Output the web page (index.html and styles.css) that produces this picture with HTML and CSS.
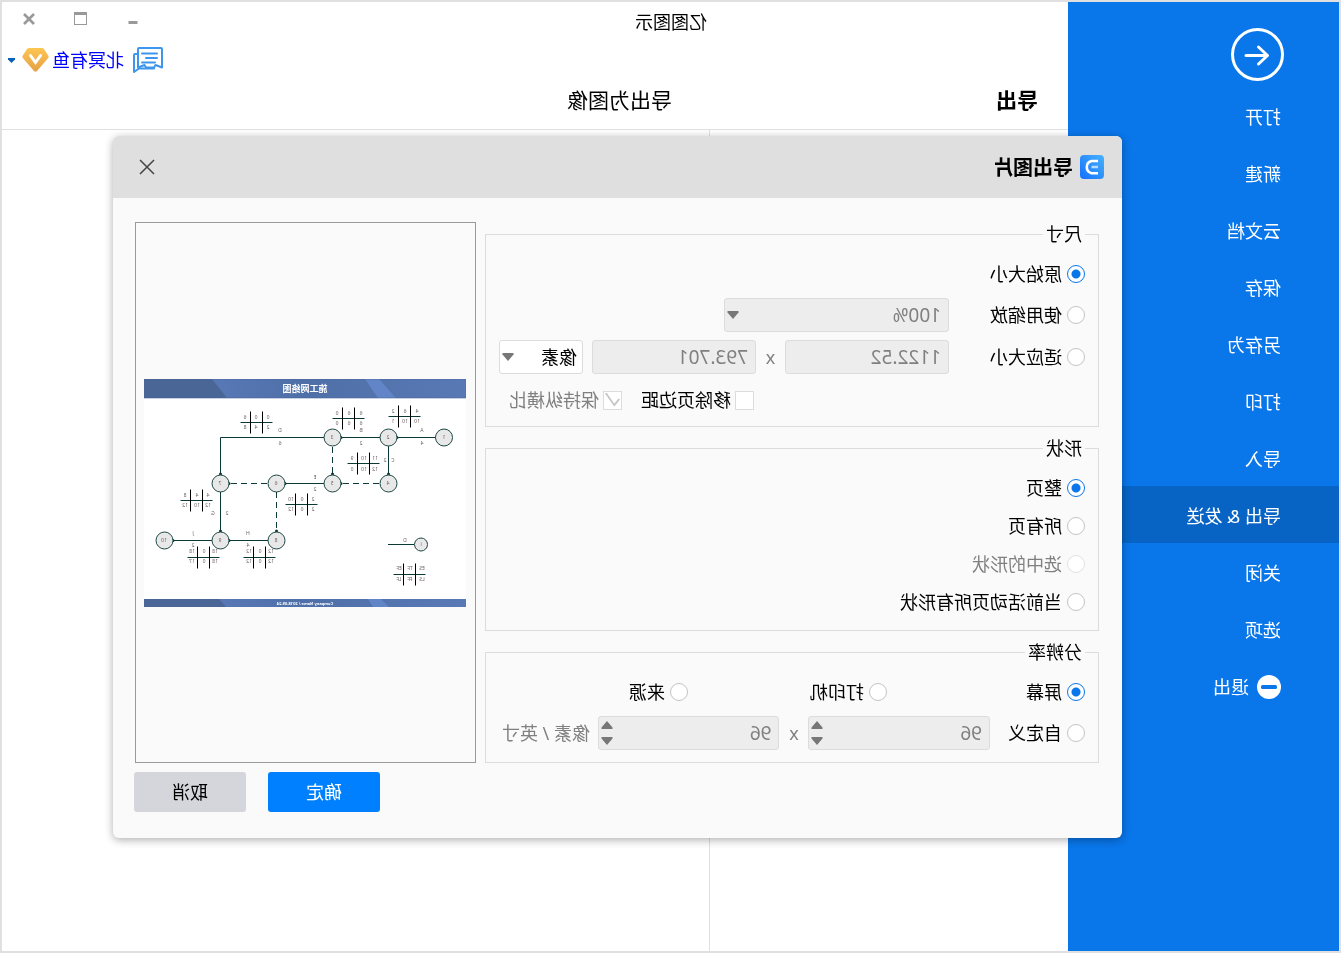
FILE: index.html
```html
<!DOCTYPE html>
<html lang="zh-CN">
<head>
<meta charset="utf-8">
<title>亿图图示</title>
<link rel="stylesheet" href="styles.css">
</head>
<body>
<div class="window">
  <nav class="sidebar">
    <button class="back" type="button" aria-label="返回">
      <svg viewBox="0 0 54 54" width="54" height="54" fill="none" stroke="#fff" stroke-linecap="round" stroke-linejoin="round"><circle cx="26.500" cy="26.500" r="25" stroke-width="3"/><path d="M38 27.500H16.500M25.500 19L16.500 27.500L25.500 36" stroke-width="3"/></svg>
    </button>
    <a class="nav-item" href="#">打开</a>
    <a class="nav-item" href="#">新建</a>
    <a class="nav-item" href="#">云文档</a>
    <a class="nav-item" href="#">保存</a>
    <a class="nav-item" href="#">另存为</a>
    <a class="nav-item" href="#">打印</a>
    <a class="nav-item" href="#">导入</a>
    <a class="nav-item active" href="#">导出 &amp; 发送</a>
    <a class="nav-item" href="#">关闭</a>
    <a class="nav-item" href="#">选项</a>
    <a class="nav-item" href="#"><svg viewBox="0 0 24 24" width="24" height="24"><circle cx="12" cy="12" r="12" fill="#fff"/><rect x="4" y="10" width="16" height="4" rx="1.500" fill="#0976ea"/></svg>退出</a>
  </nav>
  <main class="main">
    <header class="titlebar">
      <span class="app-title">亿图图示</span>
      <div class="controls">
        <button type="button" aria-label="最小化"><svg viewBox="0 0 14 14" width="14" height="14"><rect x="2.500" y="9" width="9" height="3" fill="#999"/></svg></button>
        <button type="button" aria-label="最大化"><svg viewBox="0 0 14 14" width="14" height="14" fill="none" stroke="#999"><rect x="1.500" y="1.500" width="12" height="11"/><path d="M1 1.500H14" stroke-width="3"/></svg></button>
        <button type="button" aria-label="关闭窗口"><svg viewBox="0 0 14 14" width="14" height="14" stroke="#999" stroke-width="2.600"><path d="M2 2L12 12M12 2L2 12"/></svg></button>
      </div>
    </header>
    <div class="userbar">
      <svg class="chat" viewBox="0 0 30 26" width="30" height="26" fill="none" stroke="#3d96ee" stroke-width="2" stroke-linecap="round" stroke-linejoin="round"><path d="M2 1H24Q25 1 25 2V20.500L18.500 18L17 20.500H9L7.500 18L1 20.500V2Q1 1 2 1Z"/><path d="M6 6.500H21M6 11H17M8 15.500H21M25 7H28Q29 7 29 8V25L24 21.500H9"/></svg>
      <a class="user" href="#">北冥有鱼</a>
      <svg class="gem" viewBox="0 0 27 24" width="27" height="24"><defs><linearGradient id="gold" x2="0" y2="1"><stop offset="0" stop-color="#fdc653"/><stop offset="1" stop-color="#e5a045"/></linearGradient></defs><path d="M7 0H20Q21 0 22 1L26.500 8Q27 9 26.200 10L15 23Q13.500 24.500 12 23L.800 10Q0 9 .500 8L5 1Q6 0 7 0Z" fill="url(#gold)"/><path d="M8.500 7.500L13.500 14.500L18.500 7.500" fill="none" stroke="#fff" stroke-width="3" stroke-linecap="round"/></svg>
      <svg class="caret" viewBox="0 0 7 5" width="7" height="5"><path d="M0 0H7V1.500L3.500 5L0 1.500Z" fill="#0860b8"/></svg>
    </div>
    <div class="heads">
      <h1>导出</h1>
      <h2>导出为图像</h2>
    </div>
    <div class="panels"><div class="panel-list"></div><div></div></div>
  </main>

  <section class="dialog" role="dialog" aria-labelledby="dlg-title">
    <header class="dlg-head">
      <svg viewBox="0 0 24 24" width="24" height="24"><defs><linearGradient id="brand" x2="1" y2="1"><stop offset="0" stop-color="#48b2fb"/><stop offset="1" stop-color="#1470ff"/></linearGradient></defs><rect width="24" height="24" rx="4" fill="url(#brand)"/><path d="M6 6H12.500A6.300 6.300 0 0 1 12.500 18.200H6" fill="none" stroke="#fff" stroke-width="2.600"/><path d="M6 12H12.500" stroke="#b5dbff" stroke-width="2.600"/></svg>
      <h3 id="dlg-title">导出图片</h3>
      <button class="dlg-close" type="button" aria-label="关闭"><svg viewBox="0 0 16 16" width="16" height="16" stroke="#444" stroke-width="1.500"><path d="M1 1L15 15M15 1L1 15"/></svg></button>
    </header>
    <form class="dlg-body">
      <div class="groups">
        <fieldset class="size">
          <legend>尺寸</legend>
          <div class="row"><label class="opt"><input type="radio" name="size" checked>原始大小</label></div>
          <div class="row">
            <label class="opt wide"><input type="radio" name="size">使用缩放</label>
            <span class="combo zoom"><select disabled aria-label="缩放"><option>100%</option></select><svg viewBox="0 0 12 8" width="12" height="8"><path d="M.500 0H11.500V1.500L6 8L.500 1.500Z"/></svg></span>
          </div>
          <div class="row">
            <label class="opt wide"><input type="radio" name="size">适应大小</label>
            <input class="num" type="text" value="1122.52" disabled aria-label="宽度">
            <span class="times">x</span>
            <input class="num" type="text" value="793.701" disabled aria-label="高度">
            <span class="combo unit"><select aria-label="单位"><option>像素</option></select><svg viewBox="0 0 12 8" width="12" height="8"><path d="M.500 0H11.500V1.500L6 8L.500 1.500Z"/></svg></span>
          </div>
          <div class="row checks">
            <label class="opt"><input type="checkbox">移除页边距</label>
            <label class="opt off"><input type="checkbox" checked disabled>保持纵横比</label>
          </div>
        </fieldset>
        <fieldset class="shape">
          <legend>形状</legend>
          <div class="row"><label class="opt"><input type="radio" name="shape" checked>整页</label></div>
          <div class="row"><label class="opt"><input type="radio" name="shape">所有页</label></div>
          <div class="row"><label class="opt off"><input type="radio" name="shape" disabled>选中的形状</label></div>
          <div class="row"><label class="opt"><input type="radio" name="shape">当前活动页所有形状</label></div>
        </fieldset>
        <fieldset class="dpi">
          <legend>分辨率</legend>
          <div class="row triple">
            <label class="opt"><input type="radio" name="dpi" checked>屏幕</label>
            <label class="opt"><input type="radio" name="dpi">打印机</label>
            <label class="opt"><input type="radio" name="dpi">来源</label>
          </div>
          <div class="row">
            <label class="opt custom"><input type="radio" name="dpi">自定义</label>
            <span class="spin"><input type="number" value="96" disabled aria-label="横向分辨率"><svg viewBox="0 0 12 24" width="12" height="24"><path d="M.500 8V6.500L6 0L11.500 6.500V8ZM.500 16H11.500V17.500L6 24L.500 17.500Z"/></svg></span>
            <span class="times">x</span>
            <span class="spin"><input type="number" value="96" disabled aria-label="纵向分辨率"><svg viewBox="0 0 12 24" width="12" height="24"><path d="M.500 8V6.500L6 0L11.500 6.500V8ZM.500 16H11.500V17.500L6 24L.500 17.500Z"/></svg></span>
            <span class="per">像素 / 英寸</span>
          </div>
        </fieldset>
      </div>
      <div class="side">
        <div class="preview">
          <svg class="diagram" viewBox="0 0 322 228">
            <defs>
              <linearGradient id="band"><stop offset="0" stop-color="#5879b4"/><stop offset=".5" stop-color="#4f6fa8"/><stop offset=".78" stop-color="#5878b6"/></linearGradient>
              <g id="grid"><path d="M0 11H32" stroke="#0b3a36"/><path d="M10 0V22M22 0V22" stroke="#000"/></g>
              <circle id="node" r="8.500" fill="#e8e8e8" stroke="#1d4643"/>
            </defs>
            <rect width="322" height="228" fill="#fff"/>
            <rect width="322" height="19" fill="url(#band)"/>
            <path d="M87 0H101L88 19H70Z" fill="#6185c6"/><path d="M254 0H322V19H239Z" fill="#4a6696"/>
            <rect width="322" height="19" fill="none" stroke="#48659a" stroke-width=".6"/>
            <rect y="220" width="322" height="8" fill="url(#band)"/>
            <path d="M85 220H98L93 228H77Z" fill="#6185c6"/><path d="M247 220H322V228H240Z" fill="#4a6696"/>
            <text class="cap" x="161" y="12.500">施工网络图</text>
            <text class="foot" x="161" y="225.500">Company Name / 2018-09-24</text>
            <path d="M22 58.500H245.500V104M77.500 58.500V104M134 104.500H190M245.500 104V161M190 161.500H302M52 165.500H78" fill="none" stroke="#0b3a36"/>
            <path d="M133.500 68V95M87 104.500H125M199 104.500H237M189.500 113V152" fill="none" stroke="#0b3a36" stroke-dasharray="6 4"/>
            <g fill="#0b3a36"><circle cx="69" cy="58.500" r="1.500"/><circle cx="125" cy="58.500" r="1.500"/><circle cx="77.500" cy="95" r="1.500"/><circle cx="133.500" cy="95" r="1.500"/><circle cx="125" cy="104.500" r="1.500"/><circle cx="181" cy="104.500" r="1.500"/><circle cx="237" cy="104.500" r="1.500"/><circle cx="245.500" cy="95" r="1.500"/><circle cx="189.500" cy="152" r="1.500"/><circle cx="245.500" cy="152" r="1.500"/><circle cx="237" cy="161.500" r="1.500"/><circle cx="293" cy="161.500" r="1.500"/></g>
            <use href="#node" x="22" y="58.500"/><use href="#node" x="77.500" y="58.500"/><use href="#node" x="133.500" y="58.500"/>
            <use href="#node" x="77.500" y="104.500"/><use href="#node" x="133.500" y="104.500"/><use href="#node" x="189.500" y="104.500"/><use href="#node" x="245.500" y="104.500"/>
            <use href="#node" x="189.500" y="161.500"/><use href="#node" x="245.500" y="161.500"/><use href="#node" x="301.500" y="161.500"/>
            <circle cx="45" cy="165.500" r="6.500" fill="#e8e8e8" stroke="#1d4643"/>
            <use href="#grid" x="45.500" y="26.500"/><use href="#grid" x="101.500" y="28.500"/><use href="#grid" x="193.500" y="32.500"/><use href="#grid" x="86.500" y="73.500"/><use href="#grid" x="148.500" y="114.500"/><use href="#grid" x="253.500" y="110.500"/><use href="#grid" x="246.500" y="167.500"/><use href="#grid" x="190.500" y="167.500"/><use href="#grid" x="40.500" y="184.500"/>
            <g class="tiny">
              <text x="22" y="60">1</text><text x="78" y="60">2</text><text x="134" y="60">3</text>
              <text x="78" y="106">4</text><text x="134" y="106">5</text><text x="190" y="106">6</text><text x="246" y="106">7</text>
              <text x="190" y="163">8</text><text x="246" y="163">9</text><text x="302" y="163">10</text><text x="45" y="167">i</text>
              <text x="44" y="53">A</text><text x="44" y="66">4</text><text x="105" y="53">B</text><text x="105" y="66">2</text><text x="186" y="53">D</text><text x="186" y="66">6</text>
              <text x="73" y="83">C</text><text x="81" y="83">2</text><text x="151" y="100">E</text><text x="151" y="112">2</text><text x="253" y="136">G</text><text x="239" y="136">2</text><text x="273" y="156">J</text><text x="273" y="168">2</text><text x="218" y="156">H</text><text x="218" y="168">4</text><text x="61" y="163">D</text>
              <text x="49" y="34">4</text><text x="61" y="34">6</text><text x="73" y="34">2</text><text x="49" y="44">10</text><text x="61" y="44">10</text><text x="73" y="44">1</text>
              <text x="105" y="36">6</text><text x="117" y="36">6</text><text x="129" y="36">0</text><text x="105" y="46">6</text><text x="117" y="46">6</text><text x="129" y="46">0</text>
              <text x="198" y="40">0</text><text x="210" y="40">0</text><text x="221" y="40">6</text><text x="198" y="50">2</text><text x="210" y="50">4</text><text x="221" y="50">8</text>
              <text x="91" y="81">11</text><text x="102" y="81">10</text><text x="114" y="81">9</text><text x="91" y="92">12</text><text x="102" y="92">10</text><text x="114" y="92">0</text>
              <text x="153" y="122">2</text><text x="164" y="122">0</text><text x="175" y="122">10</text><text x="153" y="132">2</text><text x="164" y="132">0</text><text x="175" y="132">12</text>
              <text x="258" y="118">4</text><text x="269" y="118">4</text><text x="281" y="118">8</text><text x="258" y="128">12</text><text x="269" y="128">10</text><text x="281" y="128">12</text>
              <text x="251" y="174">18</text><text x="262" y="174">0</text><text x="274" y="174">18</text><text x="251" y="184">18</text><text x="262" y="184">0</text><text x="274" y="184">17</text>
              <text x="195" y="174">12</text><text x="206" y="174">0</text><text x="217" y="174">12</text><text x="195" y="184">12</text><text x="206" y="184">0</text><text x="217" y="184">12</text>
              <text x="44" y="191">ES</text><text x="56" y="191">TF</text><text x="67" y="191">EF</text><text x="44" y="202">LS</text><text x="56" y="202">FF</text><text x="67" y="202">LF</text>
            </g>
          </svg>
        </div>
      </div>
      <div class="actions">
        <button class="btn primary" type="button">确定</button>
        <button class="btn" type="button">取消</button>
      </div>
    </form>
  </section>
</div>
</body>
</html>
```
FILE: styles.css
```css
* { box-sizing: border-box; }
html, body { height: 100%; margin: 0; }
body {
  font: 18px/24px "Noto Sans", "Noto Sans CJK SC", sans-serif;
  color: #000;
  background: #fff;
}
button { padding: 0; border: 0; background: none; font: inherit; color: inherit; }
svg { display: block; flex: none; }
h1, h2, h3 { margin: 0; }

/* The whole interface is shown mirrored. */
.window {
  position: relative;
  display: flex;
  min-height: 100%;
  border: 2px solid #e0e0e0;
  transform: scaleX(-1);
}

.sidebar { flex: none; width: 271px; padding-top: 26px; background: #0976ea; }
.back { display: block; margin: 0 0 5px 55px; }
.nav-item {
  display: flex;
  align-items: center;
  gap: 8px;
  height: 57px;
  padding: 2px 0 0 58px;
  color: #fff;
  text-decoration: none;
}
.nav-item.active { background: #0764c4; }

.main { flex: 1; display: flex; flex-direction: column; }
.titlebar { display: flex; justify-content: space-between; height: 41px; }
.app-title { padding: 8px 0 0 361px; }
.controls { display: flex; padding-right: 1px; }
.controls button { display: grid; place-items: center; width: 52px; height: 33px; }
.userbar { display: flex; align-items: center; justify-content: flex-end; height: 34px; padding-right: 6px; }
.user { margin: 0 3px 0 9px; color: #00f; text-decoration: none; }
.caret { margin-left: 7px; }
.heads, .panels { display: grid; grid-template-columns: 359px 1fr; }
.heads { padding-bottom: 6px; border-bottom: 1px solid #e0e0e0; }
.heads h1, .heads h2 { font-size: 21px; line-height: 46px; }
.heads h1 { padding-left: 30px; }
.heads h2 { padding-left: 37px; font-weight: 400; }
.panels { flex: 1; }
.panel-list { border-right: 1px solid #e0e0e0; }

.dialog {
  position: absolute;
  top: 134px;
  left: 217px;
  right: 111px;
  overflow: hidden;
  border-radius: 6px;
  background: #fafafa;
  box-shadow: 0 2px 8px rgba(0, 0, 0, .32);
}
.dlg-head { display: flex; align-items: center; height: 62px; padding: 0 26px 0 18px; background: #dfdfdf; }
.dlg-head h3 { margin-left: 7px; padding-top: 2px; font-size: 20px; }
.dlg-close { margin-left: auto; }
.dlg-body {
  display: grid;
  grid-template-columns: 614fr 341fr;
  gap: 9px;
  margin: 0;
  padding: 24px 22px 26px 23px;
}
.groups { display: grid; gap: 9px; }
fieldset { min-width: 0; margin: 0; padding: 7px 13px 5px; border: 1px solid #dcdcdf; }
legend { height: 24px; padding: 0 3px; line-height: 24px; }
.shape { padding: 9px 13px; }
.dpi { padding: 7px 13px 9px; }
.row { display: flex; align-items: center; height: 42px; }
.size .row:nth-of-type(2) { height: 40px; }
.size .row:nth-of-type(3) { height: 44px; }
.shape .row { height: 38px; }
.opt { display: flex; align-items: center; gap: 5px; white-space: nowrap; }
.wide { width: 136px; }
.custom { width: 95px; }
.dpi .row { height: 41px; }
.triple { display: grid; grid-template-columns: 198px 199px 1fr; }
.checks { gap: 17px; padding-left: 331px; }
.checks .opt { gap: 4px; }
.checks .off { margin-left: 2px; }
.off, .times, .per { color: #808080; }

input[type="radio"], input[type="checkbox"] {
  flex: none;
  appearance: none;
  width: 18px;
  height: 18px;
  margin: 0;
  border: 1px solid #c4c4c4;
  background: #fff;
}
input[type="radio"] { border-radius: 50%; }
input[type="radio"]:checked {
  border-color: #0976ea;
  background: radial-gradient(circle, #0976ea 0 4px, #fff 5px);
}
input[type="radio"]:disabled { border-color: #e2e2e2; }
input[type="checkbox"] { display: grid; width: 19px; height: 19px; border-color: #dcdcdf; }
input[type="checkbox"]:checked::before {
  content: "";
  width: 15px;
  height: 14px;
  margin: 1px 0 0 1px;
  background: #c4c4c4;
  clip-path: polygon(0 50%, 10% 42%, 38% 80%, 90% 0, 100% 7%, 38% 100%);
}

.num, .combo select, .spin input {
  height: 34px;
  margin: 0;
  padding: 0 7px;
  appearance: none;
  border: 1px solid #dcdcdf;
  border-radius: 3px;
  background: #ededed;
  color: #808080;
  font: 19px/24px "Noto Sans", "Noto Sans CJK SC", sans-serif;
  opacity: 1;
}
.num { flex: 1; width: 0; min-width: 0; }
.combo, .spin { position: relative; display: block; }
.combo select, .spin input { display: block; width: 100%; }
.zoom { width: 225px; }
.unit { width: 84px; margin-left: 9px; }
.combo .unit select, .unit select { padding: 0 5px; background: #fff; color: #000; font-size: 18px; }
.combo svg, .spin svg { position: absolute; right: 3px; fill: #777; pointer-events: none; }
.combo svg { top: 13px; }
.spin svg { top: 5px; }
.spin { flex: 1; }
.spin input { appearance: textfield; }
.times { width: 29px; text-align: center; }
.per { width: 91px; margin-left: 8px; white-space: nowrap; }

.side { display: grid; }
.preview { display: grid; align-items: center; padding: 0 8px 0 9px; border: 1px solid #9a9a9a; }
.diagram { width: 100%; }
.diagram text { text-anchor: middle; font-family: "Noto Sans", "Noto Sans CJK SC", sans-serif; }
.diagram .cap { font-size: 9px; font-weight: 700; fill: #fff; }
.diagram .foot { font-size: 4px; font-weight: 700; fill: #fff; }
.tiny { font-size: 5px; fill: #6b5d60; }

.actions { grid-column: 1 / -1; display: flex; justify-content: flex-end; gap: 22px; margin-right: -1px; }
.btn { width: 112px; height: 40px; border-radius: 3px; background: #d4d6db; }
.btn.primary { background: #0080ff; color: #fff; }
```
